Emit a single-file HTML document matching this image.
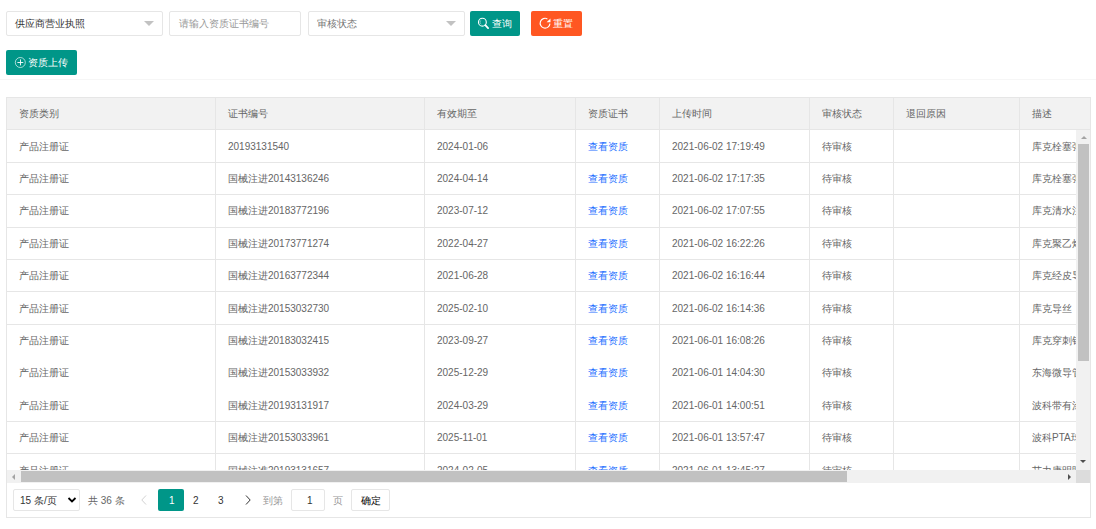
<!DOCTYPE html><html><head><meta charset="utf-8"><style>
*{margin:0;padding:0;box-sizing:border-box}
html,body{width:1096px;height:529px;overflow:hidden;background:#fff}
body{font-family:"Liberation Sans",sans-serif;font-size:10px;color:#666;position:relative}
.a{position:absolute}
.t{position:absolute;white-space:nowrap;line-height:12px;margin-top:1px}
.hl{position:absolute;height:1px;background:#e6e6e6}
.vl{position:absolute;width:1px;background:#e6e6e6}
.box{position:absolute;border:1px solid #e6e6e6;background:#fff;border-radius:2px}
.btn{position:absolute;border-radius:2px;color:#fff}
.arrow{position:absolute;width:0;height:0;border-left:5px solid transparent;border-right:5px solid transparent;border-top:5px solid #c2c2c2}
</style></head><body>

<div class="box" style="left:6px;top:11px;width:157px;height:25px"></div>
<div class="t" style="left:15px;top:17px;color:#333">供应商营业执照</div>
<div class="arrow" style="left:144px;top:21px"></div>
<div class="box" style="left:169px;top:11px;width:132px;height:25px"></div>
<div class="t" style="left:179px;top:17px;color:#999">请输入资质证书编号</div>
<div class="box" style="left:308px;top:11px;width:157px;height:25px"></div>
<div class="t" style="left:317px;top:17px;color:#757575">审核状态</div>
<div class="arrow" style="left:446px;top:21px"></div>
<div class="btn" style="left:470px;top:11px;width:50px;height:25px;background:#009688"></div>
<svg class="a" style="left:477px;top:16px" width="13" height="14" viewBox="0 0 13 14"><circle cx="5.4" cy="6.2" r="3.9" fill="none" stroke="#fff" stroke-width="1.1"/><path d="M4.3 4.1 A2.3 2.3 0 0 0 4.3 8.2" fill="none" stroke="#fff" stroke-width="0.7" opacity="0.6"/><line x1="8.3" y1="9.2" x2="11.1" y2="12.1" stroke="#fff" stroke-width="1.8" stroke-linecap="round"/></svg>
<div class="t" style="left:492px;top:17px;color:#fff">查询</div>
<div class="btn" style="left:531px;top:11px;width:51px;height:25px;background:#FF5722"></div>
<svg class="a" style="left:539px;top:17px" width="13" height="13" viewBox="0 0 13 13"><path d="M8.4 1.9 A4.9 4.9 0 1 0 10.95 6.6" fill="none" stroke="#fff" stroke-width="1.15"/><path d="M11.5 1.4 L11.5 5.3 L7.6 5.3 Z" fill="#fff"/></svg>
<div class="t" style="left:553px;top:17px;color:#fff">重置</div>
<div class="btn" style="left:6px;top:50px;width:71px;height:25px;background:#009688"></div>
<svg class="a" style="left:14px;top:57px" width="13" height="12" viewBox="0 0 13 12"><circle cx="6.3" cy="5.5" r="5" fill="none" stroke="#fff" stroke-width="0.65"/><line x1="3.4" y1="5.5" x2="9.3" y2="5.5" stroke="#fff" stroke-width="0.9"/><line x1="6.5" y1="2.4" x2="6.5" y2="8.4" stroke="#fff" stroke-width="0.9"/></svg>
<div class="t" style="left:28px;top:56px;color:#fff">资质上传</div>
<div class="a" style="left:0;top:79px;width:1096px;height:1px;background:#f6f6f6"></div>
<div class="a" style="left:6px;top:97px;width:1085px;height:421px;border:1px solid #e6e6e6"></div>
<div class="a" style="left:7px;top:98px;width:1083px;height:31.4px;background:#f2f2f2"></div>
<div class="a" style="left:7px;top:130px;width:1069px;height:340px;overflow:hidden">
<div class="hl" style="left:0;top:32px;width:1083px"></div>
<div class="t" style="left:12px;top:9.60px">产品注册证</div>
<div class="t" style="left:221px;top:9.60px">20193131540</div>
<div class="t" style="left:430px;top:9.60px">2024-01-06</div>
<div class="t" style="color:#1E6FFF;left:581px;top:9.60px">查看资质</div>
<div class="t" style="left:665px;top:9.60px">2021-06-02 17:19:49</div>
<div class="t" style="left:815px;top:9.60px">待审核</div>
<div class="t" style="left:1025px;top:9.60px">库克栓塞弹簧圈</div>
<div class="hl" style="left:0;top:64px;width:1083px"></div>
<div class="t" style="left:12px;top:42.00px">产品注册证</div>
<div class="t" style="left:221px;top:42.00px">国械注进20143136246</div>
<div class="t" style="left:430px;top:42.00px">2024-04-14</div>
<div class="t" style="color:#1E6FFF;left:581px;top:42.00px">查看资质</div>
<div class="t" style="left:665px;top:42.00px">2021-06-02 17:17:35</div>
<div class="t" style="left:815px;top:42.00px">待审核</div>
<div class="t" style="left:1025px;top:42.00px">库克栓塞弹簧圈</div>
<div class="hl" style="left:0;top:97px;width:1083px"></div>
<div class="t" style="left:12px;top:74.40px">产品注册证</div>
<div class="t" style="left:221px;top:74.40px">国械注进20183772196</div>
<div class="t" style="left:430px;top:74.40px">2023-07-12</div>
<div class="t" style="color:#1E6FFF;left:581px;top:74.40px">查看资质</div>
<div class="t" style="left:665px;top:74.40px">2021-06-02 17:07:55</div>
<div class="t" style="left:815px;top:74.40px">待审核</div>
<div class="t" style="left:1025px;top:74.40px">库克清水注射器</div>
<div class="hl" style="left:0;top:129px;width:1083px"></div>
<div class="t" style="left:12px;top:106.80px">产品注册证</div>
<div class="t" style="left:221px;top:106.80px">国械注进20173771274</div>
<div class="t" style="left:430px;top:106.80px">2022-04-27</div>
<div class="t" style="color:#1E6FFF;left:581px;top:106.80px">查看资质</div>
<div class="t" style="left:665px;top:106.80px">2021-06-02 16:22:26</div>
<div class="t" style="left:815px;top:106.80px">待审核</div>
<div class="t" style="left:1025px;top:106.80px">库克聚乙烯导管</div>
<div class="hl" style="left:0;top:161px;width:1083px"></div>
<div class="t" style="left:12px;top:139.20px">产品注册证</div>
<div class="t" style="left:221px;top:139.20px">国械注进20163772344</div>
<div class="t" style="left:430px;top:139.20px">2021-06-28</div>
<div class="t" style="color:#1E6FFF;left:581px;top:139.20px">查看资质</div>
<div class="t" style="left:665px;top:139.20px">2021-06-02 16:16:44</div>
<div class="t" style="left:815px;top:139.20px">待审核</div>
<div class="t" style="left:1025px;top:139.20px">库克经皮导入器</div>
<div class="hl" style="left:0;top:194px;width:1083px"></div>
<div class="t" style="left:12px;top:171.60px">产品注册证</div>
<div class="t" style="left:221px;top:171.60px">国械注进20153032730</div>
<div class="t" style="left:430px;top:171.60px">2025-02-10</div>
<div class="t" style="color:#1E6FFF;left:581px;top:171.60px">查看资质</div>
<div class="t" style="left:665px;top:171.60px">2021-06-02 16:14:36</div>
<div class="t" style="left:815px;top:171.60px">待审核</div>
<div class="t" style="left:1025px;top:171.60px">库克导丝</div>
<div class="t" style="left:12px;top:204.00px">产品注册证</div>
<div class="t" style="left:221px;top:204.00px">国械注进20183032415</div>
<div class="t" style="left:430px;top:204.00px">2023-09-27</div>
<div class="t" style="color:#1E6FFF;left:581px;top:204.00px">查看资质</div>
<div class="t" style="left:665px;top:204.00px">2021-06-01 16:08:26</div>
<div class="t" style="left:815px;top:204.00px">待审核</div>
<div class="t" style="left:1025px;top:204.00px">库克穿刺针</div>
<div class="t" style="left:12px;top:236.40px">产品注册证</div>
<div class="t" style="left:221px;top:236.40px">国械注进20153033932</div>
<div class="t" style="left:430px;top:236.40px">2025-12-29</div>
<div class="t" style="color:#1E6FFF;left:581px;top:236.40px">查看资质</div>
<div class="t" style="left:665px;top:236.40px">2021-06-01 14:04:30</div>
<div class="t" style="left:815px;top:236.40px">待审核</div>
<div class="t" style="left:1025px;top:236.40px">东海微导管</div>
<div class="hl" style="left:0;top:291px;width:1083px"></div>
<div class="t" style="left:12px;top:268.80px">产品注册证</div>
<div class="t" style="left:221px;top:268.80px">国械注进20193131917</div>
<div class="t" style="left:430px;top:268.80px">2024-03-29</div>
<div class="t" style="color:#1E6FFF;left:581px;top:268.80px">查看资质</div>
<div class="t" style="left:665px;top:268.80px">2021-06-01 14:00:51</div>
<div class="t" style="left:815px;top:268.80px">待审核</div>
<div class="t" style="left:1025px;top:268.80px">波科带有涂层</div>
<div class="hl" style="left:0;top:323px;width:1083px"></div>
<div class="t" style="left:12px;top:301.20px">产品注册证</div>
<div class="t" style="left:221px;top:301.20px">国械注进20153033961</div>
<div class="t" style="left:430px;top:301.20px">2025-11-01</div>
<div class="t" style="color:#1E6FFF;left:581px;top:301.20px">查看资质</div>
<div class="t" style="left:665px;top:301.20px">2021-06-01 13:57:47</div>
<div class="t" style="left:815px;top:301.20px">待审核</div>
<div class="t" style="left:1025px;top:301.20px">波科PTA球囊</div>
<div class="hl" style="left:0;top:356px;width:1083px"></div>
<div class="t" style="left:12px;top:333.60px">产品注册证</div>
<div class="t" style="left:221px;top:333.60px">国械注准20193131657</div>
<div class="t" style="left:430px;top:333.60px">2024-02-05</div>
<div class="t" style="color:#1E6FFF;left:581px;top:333.60px">查看资质</div>
<div class="t" style="left:665px;top:333.60px">2021-06-01 13:45:27</div>
<div class="t" style="left:815px;top:333.60px">待审核</div>
<div class="t" style="left:1025px;top:333.60px">艾力康明眼</div>
<div class="vl" style="left:208px;top:0;height:340px"></div>
<div class="vl" style="left:417px;top:0;height:340px"></div>
<div class="vl" style="left:568px;top:0;height:340px"></div>
<div class="vl" style="left:652px;top:0;height:340px"></div>
<div class="vl" style="left:802px;top:0;height:340px"></div>
<div class="vl" style="left:886px;top:0;height:340px"></div>
<div class="vl" style="left:1012px;top:0;height:340px"></div>
</div>
<div class="t" style="left:19px;top:107.20px">资质类别</div>
<div class="t" style="left:228px;top:107.20px">证书编号</div>
<div class="t" style="left:437px;top:107.20px">有效期至</div>
<div class="t" style="left:588px;top:107.20px">资质证书</div>
<div class="t" style="left:672px;top:107.20px">上传时间</div>
<div class="t" style="left:822px;top:107.20px">审核状态</div>
<div class="t" style="left:906px;top:107.20px">退回原因</div>
<div class="t" style="left:1032px;top:107.20px">描述</div>
<div class="vl" style="left:215px;top:98px;height:32px"></div>
<div class="vl" style="left:424px;top:98px;height:32px"></div>
<div class="vl" style="left:575px;top:98px;height:32px"></div>
<div class="vl" style="left:659px;top:98px;height:32px"></div>
<div class="vl" style="left:809px;top:98px;height:32px"></div>
<div class="vl" style="left:893px;top:98px;height:32px"></div>
<div class="vl" style="left:1019px;top:98px;height:32px"></div>
<div class="hl" style="left:7px;top:129px;width:1083px"></div>
<div class="a" style="left:1076px;top:130px;width:14px;height:340px;background:#f1f1f1"></div>
<div class="a" style="left:1078px;top:144px;width:11px;height:217px;background:#c1c1c1"></div>
<div class="a" style="left:1080.5px;top:136px;width:0;height:0;border-left:3px solid transparent;border-right:3px solid transparent;border-bottom:3.5px solid #a3a3a3"></div>
<div class="a" style="left:1080px;top:460px;width:0;height:0;border-left:3.5px solid transparent;border-right:3.5px solid transparent;border-top:3.5px solid #505050"></div>
<div class="a" style="left:7px;top:470px;width:1069px;height:13px;background:#f1f1f1"></div>
<div class="a" style="left:21px;top:471px;width:826px;height:11px;background:#c1c1c1"></div>
<div class="a" style="left:12px;top:473.5px;width:0;height:0;border-top:3.5px solid transparent;border-bottom:3.5px solid transparent;border-right:3.5px solid #a3a3a3"></div>
<div class="a" style="left:1068px;top:473.5px;width:0;height:0;border-top:3.5px solid transparent;border-bottom:3.5px solid transparent;border-left:3.5px solid #505050"></div>
<div class="a" style="left:1076px;top:470px;width:14px;height:13px;background:#dcdcdc"></div>
<div class="box" style="left:13px;top:489px;width:67px;height:22px;border-radius:2px"></div>
<div class="t" style="left:20px;top:494px;color:#333">15 条/页</div>
<svg class="a" style="left:67px;top:496px" width="10" height="8" viewBox="0 0 10 8"><path d="M1.5 2 L5 5.5 L8.5 2" fill="none" stroke="#000" stroke-width="1.8"/></svg>
<div class="t" style="left:88px;top:494px">共 36 条</div>
<svg class="a" style="left:140px;top:494px" width="8" height="12" viewBox="0 0 8 12"><path d="M6 1.5 L1.8 6 L6 10.5" fill="none" stroke="#d2d2d2" stroke-width="1"/></svg>
<div class="btn" style="left:158px;top:489px;width:26px;height:22px;background:#009688"></div>
<div class="t" style="left:169px;top:494px;color:#fff">1</div>
<div class="t" style="left:193px;top:494px;color:#333">2</div>
<div class="t" style="left:218px;top:494px;color:#333">3</div>
<svg class="a" style="left:244px;top:494px" width="8" height="12" viewBox="0 0 8 12"><path d="M2 1.5 L6.2 6 L2 10.5" fill="none" stroke="#333" stroke-width="1"/></svg>
<div class="t" style="left:263px;top:494px;color:#999">到第</div>
<div class="box" style="left:291px;top:489px;width:34px;height:22px"></div>
<div class="t" style="left:307px;top:494px;color:#333">1</div>
<div class="t" style="left:333px;top:494px;color:#999">页</div>
<div class="box" style="left:351px;top:489px;width:39px;height:22px"></div>
<div class="t" style="left:361px;top:494px;color:#000">确定</div>
</body></html>
